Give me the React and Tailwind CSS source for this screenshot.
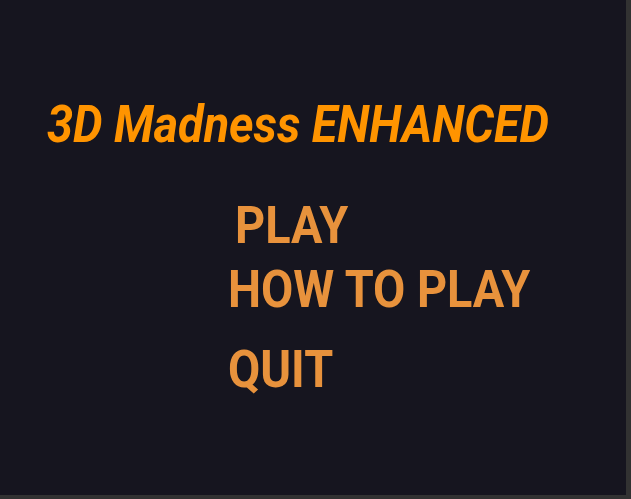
export default function App() {
  return (
    <div className="w-[631px] h-[499px] bg-[#323232] pr-[5px] pb-[4px]" style={{ fontFamily: 'Roboto, "Liberation Sans", sans-serif' }}>
      <div className="w-full h-full bg-[#16151f] flex flex-col">
        <h1 className="mt-[93px] ml-[47px] text-[52px] leading-[64px] font-bold italic text-[#ff9400] whitespace-nowrap scale-x-90 origin-left">
          3D Madness ENHANCED
        </h1>
        <div className="flex flex-col items-start ml-[228px] mt-[37px] text-[52px] leading-[64px] font-bold text-[#e8923c]">
          <button className="ml-[7px] scale-x-90 origin-left">PLAY</button>
          <button className="scale-x-90 origin-left">HOW TO PLAY</button>
          <button className="mt-[16px] scale-x-90 origin-left">QUIT</button>
        </div>
      </div>
    </div>
  );
}
